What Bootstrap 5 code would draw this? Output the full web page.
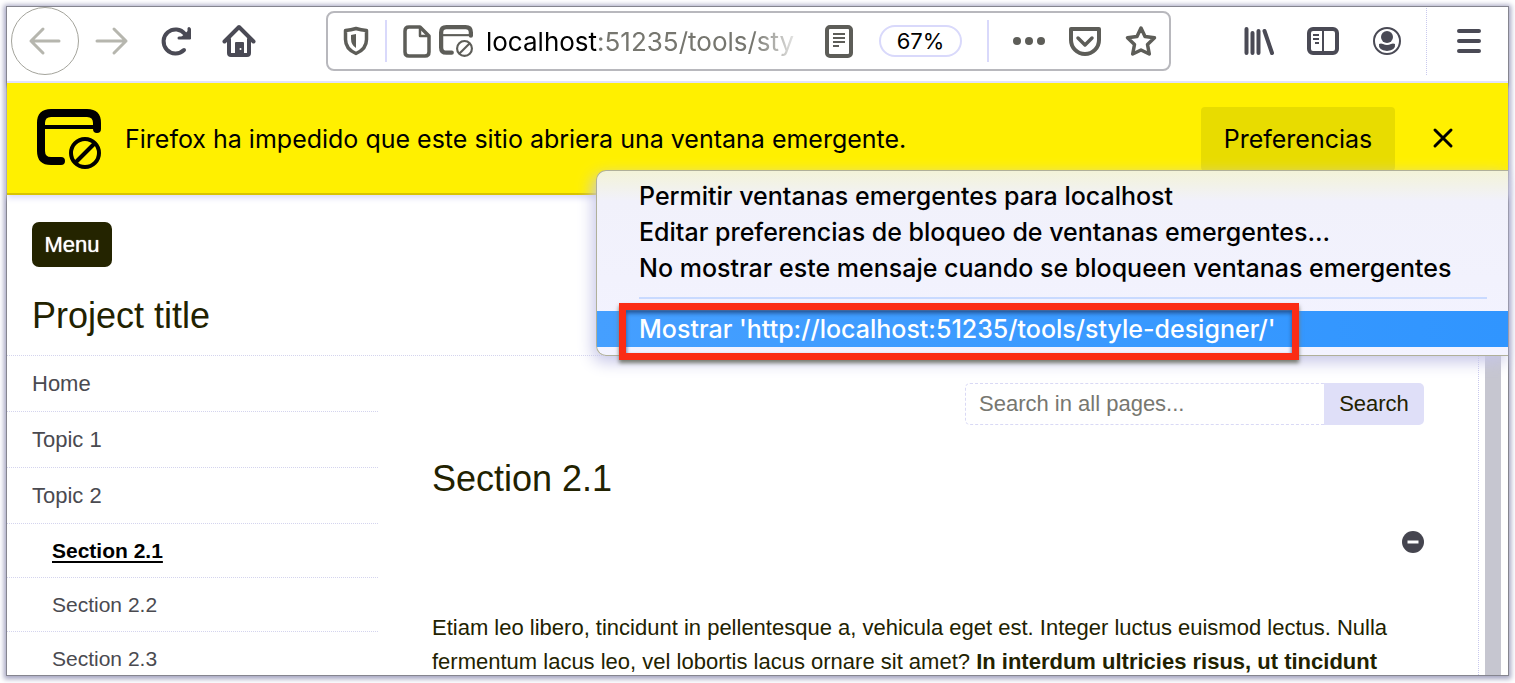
<!DOCTYPE html>
<html lang="es">
<head>
<meta charset="utf-8">
<meta name="viewport" content="width=device-width, initial-scale=1">
<title>Project title</title>
<link href="https://cdn.jsdelivr.net/npm/bootstrap@5.3.0/dist/css/bootstrap.min.css" rel="stylesheet">
<style>
  body { padding: 7px 7px 8px; background: #fff; color: #222200; font: 22px/34px "Liberation Sans", Arial, sans-serif; }
  svg { display: block; flex: none; }
  .ui-font { font-family: Inter, "Noto Sans", sans-serif; color: #000; }
  .browser { background: #fff; box-shadow: 0 0 0 1px #85858f, 0 1px 5px 3px #a4a4c0; }
  .browser button { border: 0; background: none; padding: 0; }
  .toolbar { height: 76px; border-bottom: 2px solid #e4e4fa; padding: 0 27px 6px 0; }
  .browser .back { width: 68px; height: 68px; border: 1px solid #a4a49c; border-radius: 50%; margin-left: 4px; }
  .reload { margin-left: 31px; }
  .home { margin-left: 30px; }
  .sidebar-btn { margin-left: 32px; }
  .account { margin: 0 25px 0 34px; }
  .urlbar { width: 845px; height: 60px; border: 2px solid #b8b8bd; border-radius: 8px; margin-left: 70px; color: #5d5d58; padding: 0 12px 0 15px; }
  .urlbar .rule { width: 2px; height: 42px; background: #d9d9fb; }
  .address { width: 320px; height: 42px; font-size: 26px; line-height: 44px; white-space: nowrap; margin: 0 21px 0 13px; -webkit-mask-image: linear-gradient(90deg, #000 84%, transparent); mask-image: linear-gradient(90deg, #000 84%, transparent); }
  .address .rest { color: #76766f; }
  .browser .zoom-pill { width: 83px; height: 32px; border: 2px solid #d9d9fb; border-radius: 16px; font-size: 22px; line-height: 28px; margin: 0 25px 0 26px; }
  .main-menu { border-left: 1px dotted #c9c9ee; height: 67px; padding-left: 30px; }
  .notice { height: 112px; background: #fff000; border-bottom: 2px solid #d9c400; box-shadow: 0 3px 6px #dcdcf6; padding: 1px 53px 0 30px; font-size: 25px; z-index: 2; }
  .notice-text { margin-left: 24px; }
  .browser .prefs { width: 194px; height: 64px; background: #e8dc00; border-radius: 4px; margin-right: 36px; }
  .popup { top: 87px; right: 0; width: 912px; height: 186px; padding-top: 7px; font-weight: 500; line-height: 36px; background: linear-gradient(#f3f3d8, #f1f1fb 30px, #f3f3ff); border: 1px solid #b0b09a; border-right: 0; border-radius: 10px 0 0 10px; box-shadow: -3px 6px 16px #c6c6e8; }
  .browser .popup button { display: block; width: 100%; height: 36px; padding-left: 42px; text-align: left; white-space: nowrap; font-weight: 500; }
  .browser .popup button.chosen { background: linear-gradient(90deg, #459fff, #3095ff); color: #fff; line-height: 34px; }
  .popup hr { height: 2px; margin: 11px 21px 12px 42px; border: 0; background: #c9daff; opacity: 1; }
  .marker { top: 132px; left: 22px; width: 680px; height: 57px; border: 7px solid #fb2c14; box-shadow: 0 3px 4px #777b70, inset 0 3px 4px #22518f; pointer-events: none; }
  .site { border-right: 1px dotted #c9c9ee; min-width: 0; }
  .site-head { height: 161px; padding: 27px 25px 0; border-bottom: 1px dotted #d4d4ee; }
  .browser .menu-btn { width: 80px; height: 45px; border-radius: 7px; background: #242400; color: #fff; line-height: 45px; text-shadow: 0 0 1px #fff; }
  h1, h2 { font-size: 36px; line-height: 44px; font-weight: 400; margin: 0; }
  h1 { margin-top: 27px; }
  h2 { margin-top: 32px; }
  .side { width: 371px; }
  .side a { display: block; height: 56px; line-height: 55px; padding-left: 25px; border-bottom: 1px dotted #d4d4ee; color: #4a4a50; text-decoration: none; }
  .side .sub { height: 54px; line-height: 53px; padding-left: 45px; font-size: 21px; }
  .side .here { color: #000; font-weight: 700; text-decoration: underline; text-decoration-thickness: 2px; text-underline-offset: 3px; }
  .content { padding: 27px 54px 0; min-width: 0; }
  .search { width: 459px; height: 42px; }
  .search input { min-width: 0; border: 1px dashed #d9d9f5; border-right: 0; border-radius: 5px 0 0 5px; padding: 0 13px; color: #222200; }
  .search input::placeholder { color: #777770; opacity: 1; }
  .browser .search button { width: 100px; background: #dfdff8; border-radius: 0 5px 5px 0; color: #222200; }
  .collapse-btn { margin-top: 30px; }
  .story { margin: 58px 0 0; }
  .track { width: 16px; margin: 0 7px 0 6px; background: #c6c6d0; }
</style>
</head>
<body class="vh-100 overflow-hidden">
<div class="browser h-100 d-flex flex-column">
  <header class="toolbar d-flex align-items-center flex-shrink-0">
    <button class="back d-flex align-items-center justify-content-center flex-shrink-0" aria-label="Atrás"><svg width="34" height="30" viewBox="0 0 34 30" fill="none" stroke="#b6b6ae" stroke-width="3" stroke-linecap="round" stroke-linejoin="round"><path d="M31 15H3M15 3 3 15l12 12"/></svg></button>
    <button class="ms-3" aria-label="Adelante"><svg width="34" height="30" viewBox="0 0 34 30" fill="none" stroke="#b6b6ae" stroke-width="3" stroke-linecap="round" stroke-linejoin="round"><path d="M2 15h29M19 3l12 12-12 12"/></svg></button>
    <button class="reload" aria-label="Recargar"><svg width="32" height="30" viewBox="0 0 32 30" fill="none" stroke="#4a4a55" stroke-width="4" stroke-linecap="round"><path d="M24 24A12 12 0 1 1 25 8"/><path d="M19 13h12V2Z" fill="#4a4a55" stroke="none"/><path d="M29 2.500V12H19" stroke-width="3"/></svg></button>
    <button class="home" aria-label="Inicio"><svg width="34" height="34" viewBox="0 0 34 34" fill="none" stroke="#4a4a55" stroke-width="4" stroke-linecap="round" stroke-linejoin="round"><path d="M2.500 17.500 17 3l14.500 14.500M7 15v14q0 2 2 2h16q2 0 2-2V15"/><path d="M14 31V19h7v12" fill="#4a4a55" stroke-width="2"/><circle cx="18.500" cy="25" r="1" fill="#fff" stroke="none"/></svg></button>
    <div class="urlbar d-flex align-items-center flex-shrink-0">
      <svg width="26" height="30" viewBox="0 0 26 30"><path d="M13 2.500Q18 4 23.500 4.500v9Q23.500 23 13 27.500 2.500 23 2.500 13.500v-9Q8 4 13 2.500Z" fill="none" stroke="currentColor" stroke-width="3.500" stroke-linejoin="round"/><path d="M13 8v14Q8 19 8 13V9Z" fill="currentColor"/></svg>
      <span class="rule ms-3 me-3"></span>
      <svg width="28" height="33" viewBox="0 0 28 33" fill="none" stroke="currentColor" stroke-width="3.500" stroke-linejoin="round"><path d="M6 2h11l9 9v16q0 4-4 4H6q-4 0-4-4V6q0-4 4-4Z"/><path d="M17 3v8h8" stroke-width="2.500"/></svg>
      <svg class="ms-2" width="34" height="32" viewBox="0 0 64 60" fill="none" stroke="currentColor"><path d="M24 52H14Q4 52 4 42V14Q4 4 14 4h36q10 0 10 10v6" stroke-width="8" stroke-linecap="round"/><path d="M4 19h56" stroke-width="4"/><circle cx="48" cy="44" r="14" stroke-width="4"/><path d="m38.500 53.500 19-19" stroke-width="4"/></svg>
      <div class="address ui-font"><span>localhost</span><span class="rest">:51235/tools/sty</span></div>
      <svg width="28" height="33" viewBox="0 0 28 33" fill="none" stroke="currentColor"><rect x="2" y="2" width="24" height="29" rx="3" stroke-width="4"/><path d="M8 9h12M8 13h12M8 17h12M8 21h6" stroke-width="2"/></svg>
      <button class="zoom-pill ui-font flex-shrink-0">67%</button>
      <span class="rule"></span>
      <svg class="ms-4" width="32" height="10" viewBox="0 0 32 10" fill="currentColor"><circle cx="4" cy="5" r="4"/><circle cx="16" cy="5" r="4"/><circle cx="28" cy="5" r="4"/></svg>
      <svg class="ms-4" width="32" height="29" viewBox="0 0 32 29" fill="none" stroke="currentColor" stroke-width="4" stroke-linecap="round" stroke-linejoin="round"><path d="M2 2h28v11a14 14 0 0 1-28 0Z"/><path d="m9 11 7 7 7-7" stroke-width="3.500"/></svg>
      <svg class="ms-4" width="32" height="32" viewBox="0 0 32 32" fill="none" stroke="currentColor" stroke-width="3.500" stroke-linejoin="round"><path d="m16 3 4 8.500 9.500 1.300-7 6.700 1.800 9.500L16 25l-8.300 4 1.800-9.500-7-6.700 9.500-1.300Z"/></svg>
    </div>
    <button class="ms-auto" aria-label="Biblioteca"><svg width="31" height="28" viewBox="0 0 31 28" stroke="#4a4a55" stroke-width="4" stroke-linecap="round"><path d="M2.500 2v24M8.500 6v20M14.500 4v22M20.500 4 28 26"/></svg></button>
    <button class="sidebar-btn" aria-label="Barra lateral"><svg width="32" height="28" viewBox="0 0 32 28" fill="none" stroke="#4a4a55"><rect x="2" y="2" width="28" height="24" rx="4" stroke-width="4"/><path d="M16 2v24M6 8h6M6 12h6M8 16h4" stroke-width="2"/></svg></button>
    <button class="account" aria-label="Cuenta"><svg width="28" height="28" viewBox="0 0 28 28" fill="#4a4a55"><circle cx="14" cy="14" r="13" fill="none" stroke="#4a4a55" stroke-width="2"/><circle cx="14" cy="10" r="6"/><path d="M6 17q2-1 4 0 4 2 8 0 2-1 4 0 1 6-8 7-9-1-8-7Z"/></svg></button>
    <div class="main-menu d-flex align-items-center"><button aria-label="Abrir menú"><svg width="24" height="26" viewBox="0 0 24 26" stroke="#4a4a55" stroke-width="4" stroke-linecap="round"><path d="M2 3h20M2 13h20M2 23h20"/></svg></button></div>
  </header>

  <div class="notice ui-font position-relative d-flex align-items-center flex-shrink-0" role="alert">
    <svg width="64" height="60" viewBox="0 0 64 60" fill="none" stroke="#000"><path d="M24 52H14Q4 52 4 42V14Q4 4 14 4h36q10 0 10 10v6" stroke-width="8" stroke-linecap="round"/><path d="M4 18h56" stroke-width="4"/><circle cx="48" cy="44" r="14" stroke-width="4"/><path d="m38.500 53.500 19-19" stroke-width="4"/></svg>
    <span class="notice-text flex-grow-1 text-nowrap">Firefox ha impedido que este sitio abriera una ventana emergente.</span>
    <button class="prefs ui-font" aria-expanded="true">Preferencias</button>
    <button aria-label="Cerrar"><svg width="24" height="24" viewBox="0 0 24 24" stroke="#000" stroke-width="3" stroke-linecap="round"><path d="m4 3 16 16M20 3 4 19"/></svg></button>
    <div class="popup position-absolute">
      <button class="ui-font">Permitir ventanas emergentes para localhost</button>
      <button class="ui-font">Editar preferencias de bloqueo de ventanas emergentes...</button>
      <button class="ui-font">No mostrar este mensaje cuando se bloqueen ventanas emergentes</button>
      <hr>
      <button class="ui-font chosen">Mostrar 'http://localhost:51235/tools/style-designer/'</button>
      <div class="marker position-absolute"></div>
    </div>
  </div>

  <div class="d-flex flex-grow-1 overflow-hidden">
    <div class="site flex-grow-1">
      <div class="site-head">
        <button class="menu-btn d-block">Menu</button>
        <h1>Project title</h1>
      </div>
      <div class="d-flex">
        <nav class="side flex-shrink-0">
          <a href="#">Home</a>
          <a href="#">Topic 1</a>
          <a href="#">Topic 2</a>
          <a href="#" class="sub here">Section 2.1</a>
          <a href="#" class="sub">Section 2.2</a>
          <a href="#" class="sub">Section 2.3</a>
        </nav>
        <main class="content flex-grow-1">
          <form class="search d-flex ms-auto">
            <input class="flex-grow-1" type="text" placeholder="Search in all pages..." aria-label="Search in all pages">
            <button type="button">Search</button>
          </form>
          <h2>Section 2.1</h2>
          <button class="collapse-btn d-block ms-auto" aria-label="Hide"><svg width="22" height="22" viewBox="0 0 22 22"><circle cx="11" cy="11" r="11" fill="#45454f"/><path d="M5.500 11h11" stroke="#fff" stroke-width="3"/></svg></button>
          <p class="story">Etiam leo libero, tincidunt in pellentesque a, vehicula eget est. Integer luctus euismod lectus. Nulla fermentum lacus leo, vel lobortis lacus ornare sit amet? <strong>In interdum ultricies risus, ut tincidunt</strong></p>
        </main>
      </div>
    </div>
    <div class="track flex-shrink-0"></div>
  </div>
</div>
<script src="https://cdn.jsdelivr.net/npm/bootstrap@5.3.0/dist/js/bootstrap.bundle.min.js"></script>
</body>
</html>
